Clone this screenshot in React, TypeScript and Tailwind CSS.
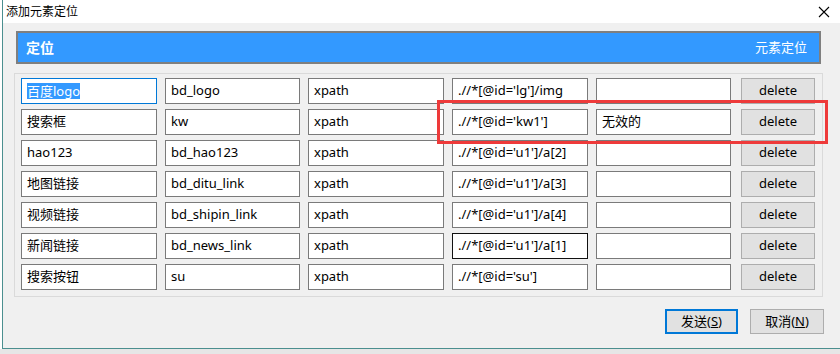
import React from 'react';

// 元素定位 데이터: 이름, id, 방식, 표현식, 비고
const rows = [
  { name: '百度logo', id: 'bd_logo', by: 'xpath', expr: ".//*[@id='lg']/img", note: '' },
  { name: '搜索框', id: 'kw', by: 'xpath', expr: ".//*[@id='kw1']", note: '无效的' },
  { name: 'hao123', id: 'bd_hao123', by: 'xpath', expr: ".//*[@id='u1']/a[2]", note: '' },
  { name: '地图链接', id: 'bd_ditu_link', by: 'xpath', expr: ".//*[@id='u1']/a[3]", note: '' },
  { name: '视频链接', id: 'bd_shipin_link', by: 'xpath', expr: ".//*[@id='u1']/a[4]", note: '' },
  { name: '新闻链接', id: 'bd_news_link', by: 'xpath', expr: ".//*[@id='u1']/a[1]", note: '' },
  { name: '搜索按钮', id: 'su', by: 'xpath', expr: ".//*[@id='su']", note: '' },
];

const font = { fontFamily: "'Noto Sans', 'Noto Sans CJK SC', sans-serif" };

function Field({
  value,
  width,
  focused = false,
  hovered = false,
  selected = false,
}: {
  value: string;
  width: string;
  focused?: boolean;
  hovered?: boolean;
  selected?: boolean;
}) {
  const border = focused
    ? 'border-[#0078d7]'
    : hovered
    ? 'border-[#111111]'
    : 'border-[#7a7a7a]';
  return (
    <div
      className={`${width} h-[26px] shrink-0 bg-white border ${border} flex items-center pl-[5px] text-[13px] text-black whitespace-nowrap overflow-hidden`}
    >
      {selected ? (
        <span className="bg-[#3399ff] text-white leading-[16px]">{value}</span>
      ) : (
        value
      )}
    </div>
  );
}

export default function App() {
  return (
    <div className="w-[840px] h-[354px] bg-white overflow-hidden" style={font}>
      <div className="ml-[2px] h-[349px] border-l border-b border-[#4b8f8f] bg-[#f0f0f0] flex flex-col">
        {/* 타이틀 바 */}
        <div className="h-[23px] bg-white flex items-center justify-between pl-[3px] pr-[10px]">
          <span className="text-[12px] text-black leading-none">添加元素定位</span>
          <svg width="12" height="12" viewBox="0 0 12 12">
            <path d="M1 1 L11 11 M11 1 L1 11" stroke="#000" strokeWidth="1.1" />
          </svg>
        </div>

        {/* 헤더 */}
        <div className="ml-[13px] mt-[8px] w-[805px] h-[33px] border-2 border-[#7f7f7f] bg-[#3399ff] flex items-center justify-between pl-[8px] pr-[12px] text-white">
          <span className="text-[14px] font-bold">定位</span>
          <span className="text-[13px]">元素定位</span>
        </div>

        {/* 목록 패널 */}
        <div className="relative ml-[11px] mt-[9px] w-[809px] border border-[#dadada] pl-[6px] pt-[4px] pb-[6px] flex flex-col gap-[5px]">
          {rows.map((r, i) => (
            <div key={r.id} className="flex items-center">
              <Field value={r.name} width="w-[136px]" focused={i === 0} selected={i === 0} />
              <div className="w-[8px] shrink-0" />
              <Field value={r.id} width="w-[135px]" />
              <div className="w-[8px] shrink-0" />
              <Field value={r.by} width="w-[136px]" />
              <div className="w-[8px] shrink-0" />
              <Field value={r.expr} width="w-[136px]" hovered={i === 5} />
              <div className="w-[8px] shrink-0" />
              <Field value={r.note} width="w-[135px]" />
              <div className="w-[10px] shrink-0" />
              <button className="w-[74px] h-[26px] shrink-0 bg-[#e1e1e1] border border-[#adadad] text-[13px] text-black">
                delete
              </button>
            </div>
          ))}
          {/* 빨간 강조 박스 */}
          <div className="absolute left-[422px] top-[26px] w-[391px] h-[44px] border-[3px] border-[#ee3a3a] pointer-events-none" />
        </div>

        {/* 하단 버튼 */}
        <div className="flex justify-end gap-[12px] mt-[12px] pr-[16px]">
          <button className="w-[73px] h-[25px] bg-[#e1e1e1] border-2 border-[#0078d7] text-[13px] text-black">
            发送(<span className="underline">S</span>)
          </button>
          <button className="w-[74px] h-[25px] bg-[#e1e1e1] border border-[#adadad] text-[13px] text-black">
            取消(<span className="underline">N</span>)
          </button>
        </div>
      </div>
      <div className="h-[5px] bg-[#e6e6e6]" />
    </div>
  );
}
